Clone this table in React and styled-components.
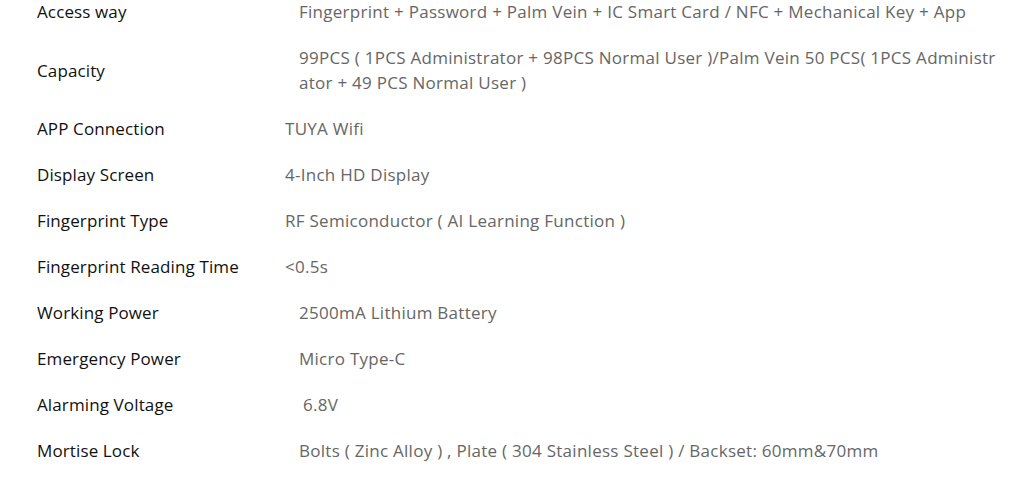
import React from 'react';
import styled, { createGlobalStyle } from 'styled-components';

const GlobalStyle = createGlobalStyle`
  html, body {
    margin: 0;
    padding: 0;
    background: #fff;
  }
  body {
    font-family: 'Open Sans', 'Liberation Sans', sans-serif;
    overflow: hidden;
  }
`;

const Page = styled.div`
  width: 1024px;
  height: 478px;
  overflow: hidden;
  background: #fff;
`;

const Table = styled.div`
  margin-top: -11px;
  margin-left: 37px;
  display: grid;
  grid-template-columns: 248px 720px;
`;

const Label = styled.div`
  display: flex;
  align-items: center;
  padding: 11px 0;
  font-size: 17px;
  line-height: 24px;
  letter-spacing: 0.12px;
  color: #111;
  font-weight: 500;
`;

const Value = styled.div`
  display: flex;
  flex-direction: column;
  justify-content: center;
  gap: 1px;
  padding: 11px 0 11px ${(p) => p.$indent}px;
  font-size: 17px;
  line-height: 24px;
  letter-spacing: 0.27px;
  color: #666;
  white-space: nowrap;
`;

const specs = [
  { label: 'Access way', indent: 14, lines: ['Fingerprint + Password + Palm Vein + IC Smart Card / NFC + Mechanical Key + App'] },
  {
    label: 'Capacity',
    indent: 14,
    lines: [
      '99PCS ( 1PCS Administrator + 98PCS Normal User )/Palm Vein 50 PCS( 1PCS Administr',
      'ator + 49 PCS Normal User )',
    ],
  },
  { label: 'APP Connection', indent: 0, lines: ['TUYA Wifi'] },
  { label: 'Display Screen', indent: 0, lines: ['4-Inch HD Display'] },
  { label: 'Fingerprint Type', indent: 0, lines: ['RF Semiconductor ( AI Learning Function )'] },
  { label: 'Fingerprint Reading Time', indent: 0, lines: ['<0.5s'] },
  { label: 'Working Power', indent: 14, lines: ['2500mA Lithium Battery'] },
  { label: 'Emergency Power', indent: 14, lines: ['Micro Type-C'] },
  { label: 'Alarming Voltage', indent: 18, lines: ['6.8V'] },
  { label: 'Mortise Lock', indent: 14, lines: ['Bolts ( Zinc Alloy ) , Plate ( 304 Stainless Steel ) / Backset: 60mm&70mm'] },
];

export default function App() {
  return (
    <Page>
      <GlobalStyle />
      <Table>
        {specs.map((s) => (
          <React.Fragment key={s.label}>
            <Label>{s.label}</Label>
            <Value $indent={s.indent}>
              {s.lines.map((l) => (
                <span key={l}>{l}</span>
              ))}
            </Value>
          </React.Fragment>
        ))}
      </Table>
    </Page>
  );
}
